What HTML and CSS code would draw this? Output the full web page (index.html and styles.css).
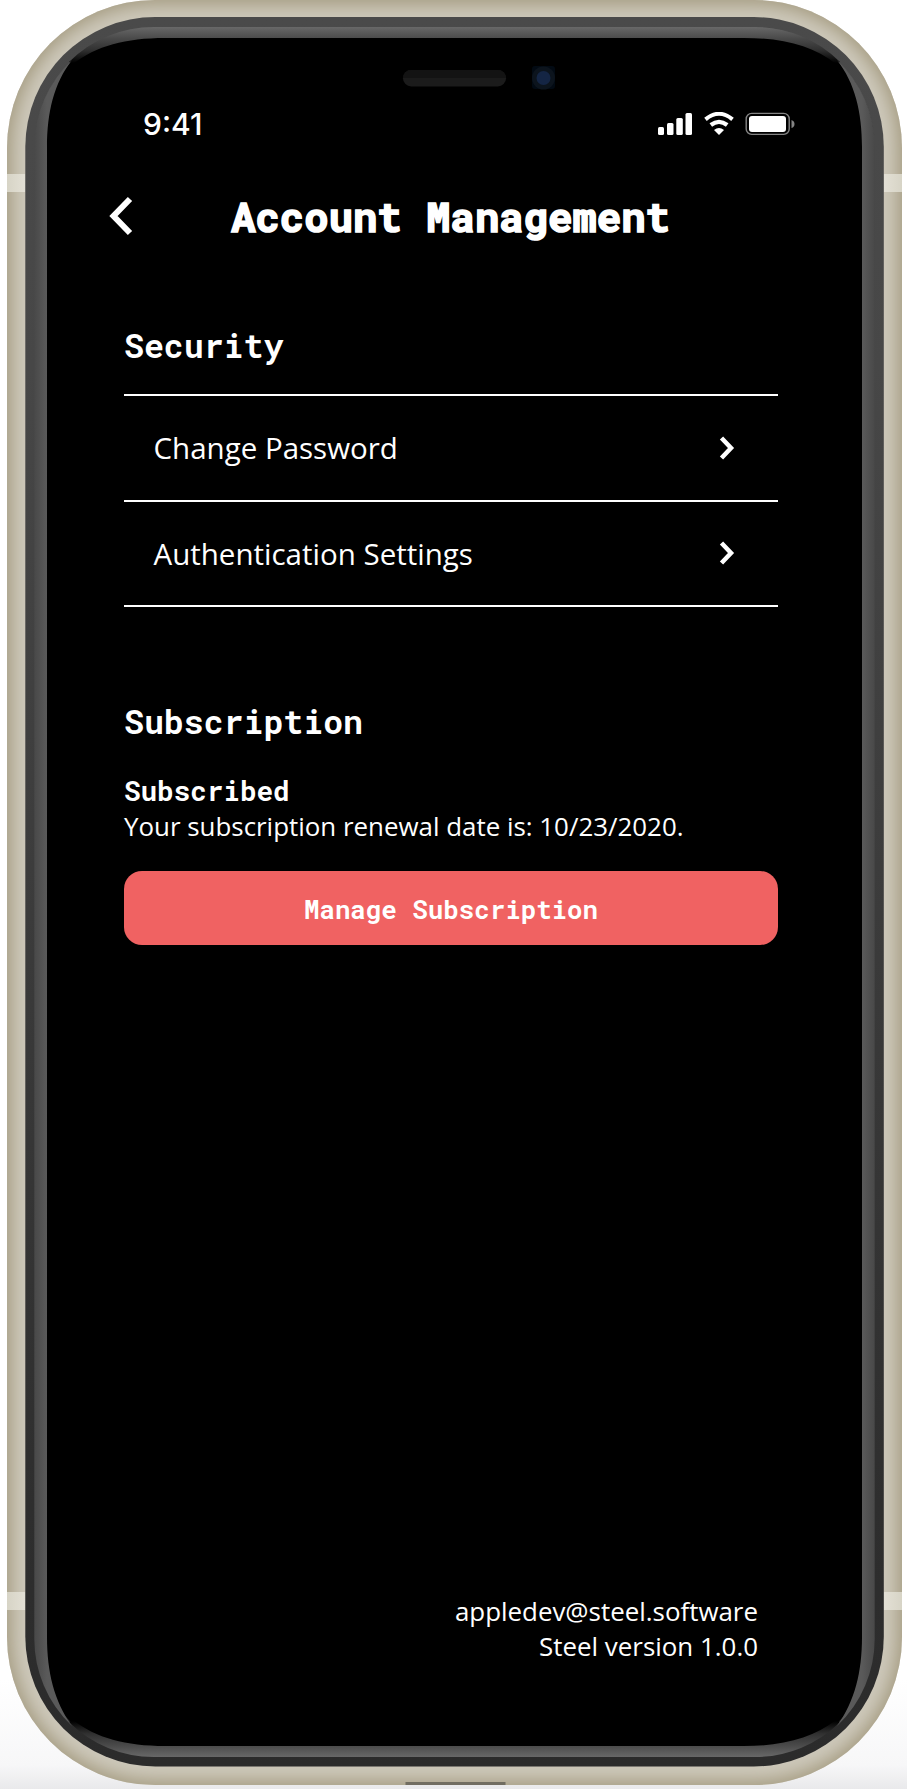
FILE: index.html
```
<!DOCTYPE html>
<html lang="en">
<head>
<meta charset="utf-8">
<title>Account Management</title>
<link rel="stylesheet" href="styles.css">
</head>
<body>
<div class="phone">
  <svg class="bezel" viewBox="0 0 907 1789" aria-hidden="true">
    <defs>
      <linearGradient id="rim" x1="0" y1="0" x2="0" y2="1"><stop offset="0" stop-color="#4a4a4a"/><stop offset=".2" stop-color="#474747"/><stop offset=".85" stop-color="#2e2e2e"/><stop offset="1" stop-color="#2b2b2b"/></linearGradient>
      <linearGradient id="side" gradientUnits="userSpaceOnUse" x1="34" y1="0" x2="47" y2="0"><stop offset="0" stop-color="#484848"/><stop offset="1" stop-color="#5a5a5a"/></linearGradient>
      <linearGradient id="edge" gradientUnits="userSpaceOnUse" x1="0" y1="27" x2="0" y2="63"><stop offset="0" stop-color="#686868"/><stop offset=".32" stop-color="#4a4a4a"/><stop offset=".65" stop-color="#303030"/><stop offset="1" stop-color="#000"/></linearGradient>
      <linearGradient id="band" gradientUnits="userSpaceOnUse" x1="7" y1="0" x2="25" y2="0"><stop offset="0" stop-color="#d7d4c6"/><stop offset="1" stop-color="#e3e0d5"/></linearGradient>
      <g id="half">
        <path fill="url(#band)" d="M7 174h18.300v18h-18.300zM7 1592h18.300v18h-18.300z"/>
      </g>
      <path id="gloss" fill="url(#side)" d="M34.300 147A120 120 0 0 1 72 60C54 83 47 112 47 147V1637C47 1672 54 1701 72 1726A120 120 0 0 1 34.300 1637Z"/>
      <path id="lip" fill="url(#edge)" d="M457 27H154A120 120 0 0 0 69 62L73 64C96 46 126 38 165 38H457Z"/>
    </defs>
    <use href="#half"/><use href="#half" transform="matrix(-1 0 0 1 909 0)"/>
    <rect x="25.300" y="17" width="858.500" height="1749.500" rx="130" fill="url(#rim)"/>
    <rect x="34.300" y="27" width="840.500" height="1730" rx="120" stroke="url(#rim)" stroke-width="1.500"/>
    <use href="#lip"/><use href="#lip" transform="matrix(-1 0 0 1 909 0)"/>
    <use href="#lip" transform="matrix(1 0 0 -1 0 1784)"/><use href="#lip" transform="matrix(-1 0 0 -1 909 1784)"/>
    <use href="#gloss"/><use href="#gloss" transform="matrix(-1 0 0 1 909 0)"/>
    <rect x="403" y="70" width="103" height="16.500" rx="8.250" fill="#1b1b1b"/>
    <path d="M411 70h87a8 8 0 0 1 8 8H403a8 8 0 0 1 8-8" fill="#131313"/>
    <rect x="532" y="66" width="23" height="23" rx="3" fill="#020a13"/>
    <circle cx="543.500" cy="78" r="11.500" fill="#0c141d"/>
    <circle cx="543.500" cy="78" r="7" fill="#142544"/>
    <rect x="405.500" y="1782" width="100" height="3" fill="#716d61"/>
  </svg>
  <main class="screen">
    <div class="status">
      <span class="time">9:41</span>
      <svg class="indicators" viewBox="0 0 138 24" fill="#fff" aria-hidden="true">
        <rect x="1" y="15" width="6" height="8" rx="1.500"/><rect x="10" y="11" width="6.500" height="12" rx="1.500"/><rect x="19.300" y="6" width="6.500" height="17" rx="1.500"/><rect x="28.500" y="1" width="6.500" height="22" rx="1.500"/>
        <g fill="none" stroke="#fff"><path stroke-width="4" d="M48.500 7.400Q62 -3.800 75.500 7.400"/><path stroke-width="4.200" d="M53.800 13Q62 6.600 70.200 13"/></g>
        <path d="M57 18Q62 14 67 18L62 23Z"/>
        <rect x="89.200" y="1.400" width="43" height="21" rx="5.500" fill="none" stroke="#848484" stroke-width="1.400"/>
        <rect x="92" y="4" width="37" height="16" rx="3"/><path fill="#848484" d="M134.500 8q3 1 3 4t-3 4z"/>
      </svg>
    </div>
    <header class="bar">
      <svg class="back" viewBox="0 0 24 40" aria-hidden="true"><path d="M21 3L4.500 20L21 37"/></svg>
      <h1 class="title">Account Management</h1>
    </header>
    <section class="security">
      <h2 class="heading">Security</h2>
      <ul class="list">
        <li class="row"><span>Change Password</span><svg class="chevron" viewBox="0 0 16 24" aria-hidden="true"><path d="M2.500 2L12 12L2.500 22"/></svg></li>
        <li class="row"><span>Authentication Settings</span><svg class="chevron" viewBox="0 0 16 24" aria-hidden="true"><path d="M2.500 2L12 12L2.500 22"/></svg></li>
      </ul>
    </section>
    <section class="subscription">
      <h2 class="heading">Subscription</h2>
      <h3 class="state">Subscribed</h3>
      <p class="note">Your subscription renewal date is: 10/23/2020.</p>
      <button class="manage">Manage Subscription</button>
    </section>
    <footer class="footer"><div>appledev@steel.software</div><div>Steel version 1.0.0</div></footer>
  </main>
</div>
</body>
</html>
```
FILE: styles.css
```
* { box-sizing: border-box; }
body { margin: 0; height: 1789px; overflow: hidden; color: #fff; background: linear-gradient(#fff 1680px, #f7f7f8 1765px, #e9e9eb 1789px); font-family: "Open Sans", sans-serif; }
.phone { position: relative; width: 907px; height: 1789px; padding: 0 5px 4.5px 7px; }
.phone::before { content: ""; display: block; height: 100%; border-radius: 148px; background: #cdc8ba; box-shadow: inset 0 0 16px 5px #a69d83; }
.bezel { position: absolute; inset: 0; width: 907px; height: 1789px; }
.screen { position: absolute; inset: 0; padding: 112px 129px 0 124px; display: flex; flex-direction: column; }
h1, h2, h3, p, ul { margin: 0; padding: 0; }
.title, .heading, .state, .manage { font-family: "Roboto Mono", "DejaVu Sans Mono", monospace; font-weight: 700; white-space: nowrap; }
.status { height: 24px; padding-left: 19px; display: flex; justify-content: space-between; margin-right: -17px; }
.time { font: 500 30px/24px Inter, sans-serif; }
.indicators { width: 138px; height: 24px; }
.bar { height: 60px; margin: 50px 0 0 -15px; display: flex; }
.back { width: 24px; height: 40px; margin: 10px 98px 0 0; fill: none; stroke: #fff; stroke-width: 6; }
.title { font-size: 40.650px; line-height: 60px; -webkit-text-stroke: 1.600px #fff; }
.heading { font-size: 33.200px; line-height: 48px; }
.security { margin-top: 75px; }
.list { list-style: none; margin-top: 25px; border-top: 2px solid #fff; }
.row { height: 105.500px; padding: 0 43px 0 29.500px; display: flex; align-items: center; justify-content: space-between; border-bottom: 2px solid #fff; font-size: 29.500px; }
.chevron { width: 16px; height: 24px; fill: none; stroke: #fff; stroke-width: 4.500; }
.subscription { margin-top: 90px; }
.state { font-size: 27.600px; line-height: 36px; margin-top: 27px; }
.note { font-size: 25.900px; line-height: 35px; margin-top: 1px; white-space: nowrap; }
.manage { display: block; width: 654px; height: 74px; margin-top: 27px; padding: 1px 0 0; border: 0; border-radius: 18px; color: #fff; background: #f06262; font-size: 25.800px; }
.footer { margin: 649px 20px 0 0; text-align: right; font-size: 25.900px; line-height: 35px; }
```
